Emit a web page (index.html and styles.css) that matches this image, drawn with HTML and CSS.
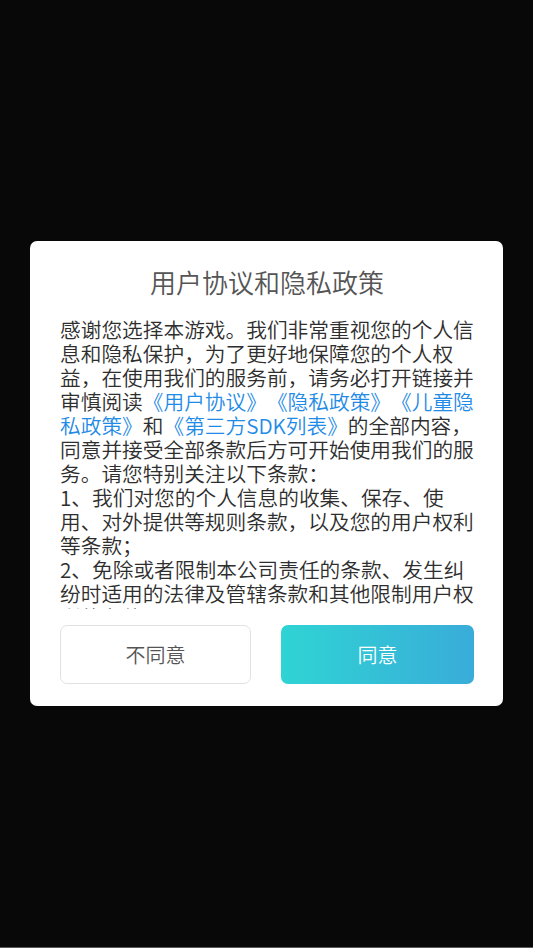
FILE: index.html
```html
<!DOCTYPE html>
<html lang="zh-CN">
<head>
<meta charset="utf-8">
<title>用户协议和隐私政策</title>
<link rel="stylesheet" href="styles.css">
</head>
<body>
<div class="screen">
  <div class="dialog">
    <h1 class="title">用户协议和隐私政策</h1>
    <div class="content">
      <p class="text">感谢您选择本游戏。我们非常重视您的个人信息和隐私保护，为了更好地保障您的个人权益，在使用我们的服务前，请务必打开链接并审慎阅读<a class="link">《用户协议》</a><a class="link">《隐私政策》</a><a class="link">《儿童隐私政策》</a>和<a class="link">《第三方SDK列表》</a>的全部内容，同意并接受全部条款后方可开始使用我们的服务。请您特别关注以下条款：<br>1、我们对您的个人信息的收集、保存、使用、对外提供等规则条款，以及您的用户权利等条款；<br>2、免除或者限制本公司责任的条款、发生纠纷时适用的法律及管辖条款和其他限制用户权利的条款；<br>3、我们将严格按照相关法律法规及上述协议的要求处理您的个人信息。</p>
    </div>
    <div class="actions">
      <button class="btn btn-cancel">不同意</button>
      <button class="btn btn-ok">同意</button>
    </div>
  </div>
</div>
</body>
</html>
```

FILE: styles.css
```css
html, body {
  margin: 0;
  padding: 0;
  background: #080808;
}

body {
  font-family: "Noto Sans CJK SC", "Noto Sans", sans-serif;
}

.screen {
  width: 533px;
  height: 948px;
  box-sizing: border-box;
  border-bottom: 1px solid #5a5a5a;
  display: flex;
  align-items: center;
  justify-content: center;
}

.dialog {
  width: 473px;
  height: 465px;
  box-sizing: border-box;
  margin-top: -1px;
  background: #ffffff;
  border-radius: 7px;
  padding: 24px 29px 22px 30px;
  display: flex;
  flex-direction: column;
}

.title {
  margin: 0;
  height: 34px;
  line-height: 34px;
  font-size: 26px;
  font-weight: 350;
  color: #555555;
  text-align: center;
}

.content {
  margin-top: 18px;
  height: 292px;
  margin-bottom: 5px;
  overflow: hidden;
}

.text {
  margin: 0;
  width: 415px;
  font-size: 20.7px;
  font-weight: 350;
  line-height: 24px;
  color: #2e2e2e;
  text-spacing-trim: space-all;
  font-feature-settings: "halt" 0, "palt" 0;
}

.link {
  color: #1f8be6;
  text-decoration: none;
}

.actions {
  margin-top: 11px;
  display: flex;
  gap: 30px;
}

.btn {
  height: 59px;
  border-radius: 7px;
  font-family: "Noto Sans CJK SC", "Noto Sans", sans-serif;
  font-size: 20px;
  font-weight: 350;
  padding: 0;
  cursor: pointer;
}

.btn-cancel {
  width: 191px;
  background: #ffffff;
  border: 1.5px solid #e2e2e2;
  color: #555555;
}

.btn-ok {
  width: 193px;
  border: none;
  color: #ffffff;
  background: linear-gradient(90deg, #2fd4d4 0%, #39acd9 100%);
}
```
